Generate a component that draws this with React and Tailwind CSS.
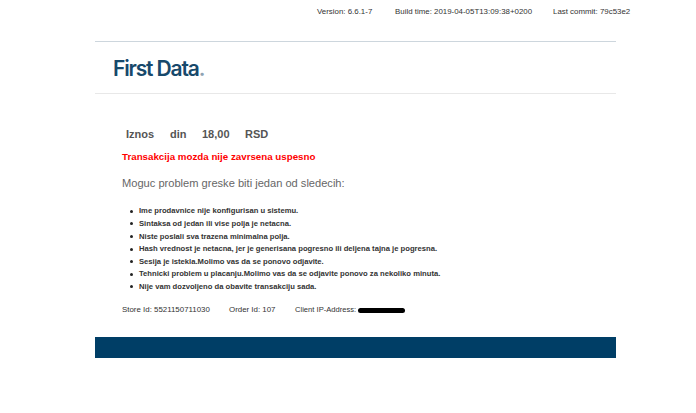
const reasons = [
  "Ime prodavnice nije konfigurisan u sistemu.",
  "Sintaksa od jedan ili vise polja je netacna.",
  "Niste poslali sva trazena minimalna polja.",
  "Hash vrednost je netacna, jer je generisana pogresno ili deljena tajna je pogresna.",
  "Sesija je istekla.Molimo vas da se ponovo odjavite.",
  "Tehnicki problem u placanju.Molimo vas da se odjavite ponovo za nekoliko minuta.",
  "Nije vam dozvoljeno da obavite transakciju sada.",
];

export default function App() {
  return (
    <div className="h-[413px] w-[696px] overflow-hidden bg-white font-['Liberation_Sans',Arial,sans-serif]">
      <div className="flex h-[23px] items-center pl-[317px] text-[7.9px] leading-none text-[#333]">
        <span className="w-[78px]">Version: 6.6.1-7</span>
        <span className="w-[158px]">Build time: 2019-04-05T13:09:38+0200</span>
        <span>Last commit: 79c53e2</span>
      </div>

      <div className="ml-[95px] mt-[18px] w-[521px]">
        <div className="flex h-[53px] items-center border-y border-t-[#cdd6dd] border-b-[#e8e8e8] pl-[18px] pt-[2px]">
          <span className="font-['Inter',sans-serif] text-[21px] font-semibold leading-none tracking-[-1.15px] text-[#17496b]">
            First Data<span className="text-[#8fa3b3]">.</span>
          </span>
        </div>

        <div className="mt-[33px] flex pl-[31px] text-[11px] font-bold leading-[14px] text-[#555]">
          <span className="w-[44px]">Iznos</span>
          <span className="w-[32px]">din</span>
          <span className="w-[43px]">18,00</span>
          <span>RSD</span>
        </div>

        <p className="ml-[27px] mt-[9px] text-[9.75px] font-bold leading-[13px] text-[#ff0000]">
          Transakcija mozda nije zavrsena uspesno
        </p>

        <p className="ml-[27px] mt-[13px] text-[11.1px] leading-[14px] text-[#666]">
          Moguc problem greske biti jedan od sledecih:
        </p>

        <ul className="ml-[35px] mt-[15px]">
          {reasons.map((reason) => (
            <li key={reason} className="flex h-[12.6px] items-center gap-[6px] text-[7.65px] font-bold leading-none text-[#333]">
              <span className="h-[3px] w-[3px] rounded-full bg-[#222]" />
              {reason}
            </li>
          ))}
        </ul>

        <div className="ml-[27px] mt-[11px] flex items-center whitespace-nowrap text-[7.9px] leading-[12px] text-[#333]">
          <span className="w-[107px]">Store Id: 5521150711030</span>
          <span className="w-[66px]">Order Id: 107</span>
          <span className="w-[63px] text-[7.6px]">Client IP-Address:</span>
          <span className="h-[5px] w-[47px] rounded-full bg-black" />
        </div>

        <div className="mt-[21px] h-[21px] bg-[#003e66]" />
      </div>
    </div>
  );
}
